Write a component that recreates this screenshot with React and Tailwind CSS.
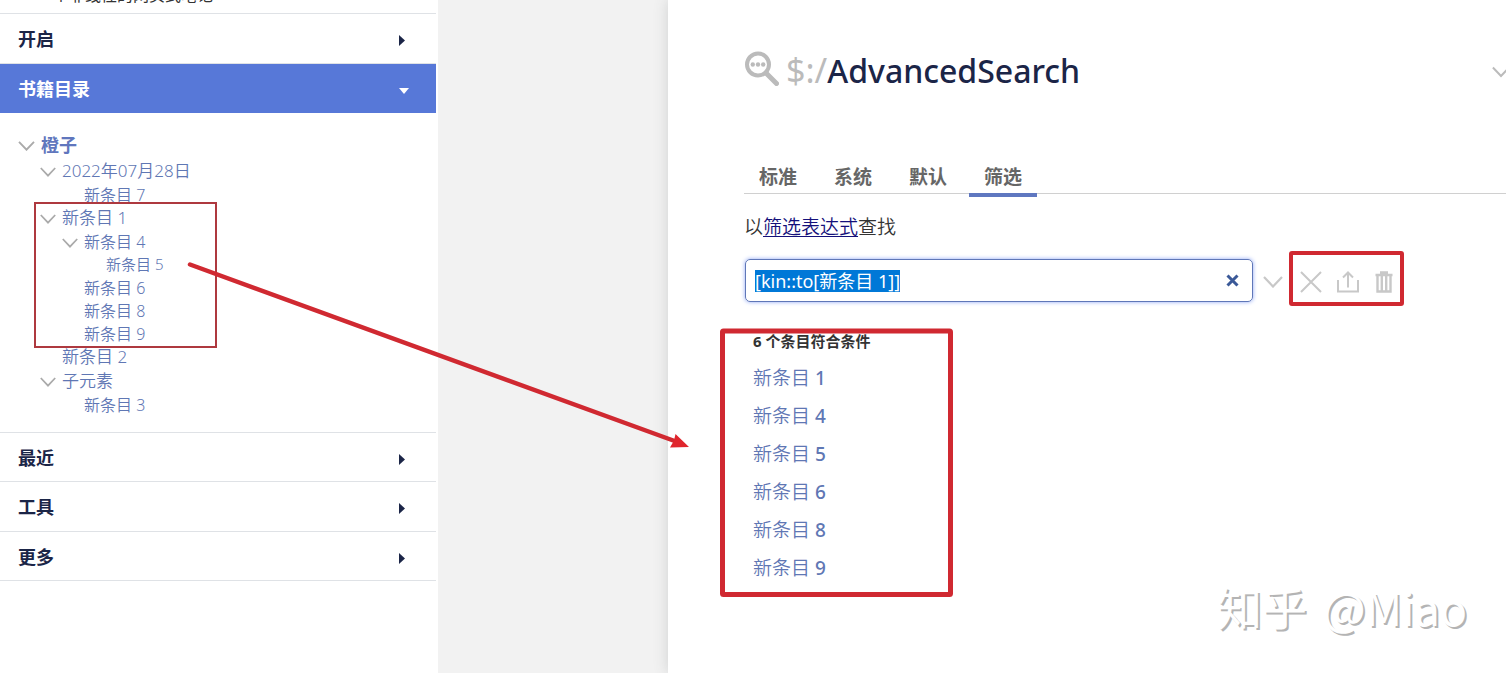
import { useEffect, useRef, useState } from "react";

const TREE = [
  { text: "2022年07月28日", level: 2, open: true },
  { text: "新条目 7", level: 3 },
  { text: "新条目 1", level: 2, open: true },
  { text: "新条目 4", level: 3, open: true },
  { text: "新条目 5", level: 4 },
  { text: "新条目 6", level: 3 },
  { text: "新条目 8", level: 3 },
  { text: "新条目 9", level: 3 },
  { text: "新条目 2", level: 2 },
  { text: "子元素", level: 2, open: true },
  { text: "新条目 3", level: 3 },
];

const LEVELS = {
  2: "h-6 pl-[40px] text-[17px]",
  3: "h-[23px] pl-[62px] text-[16px]",
  4: "h-[23px] pl-[84px] text-[15px]",
};

const TABS = ["标准", "系统", "默认", "筛选"];
const RESULTS = [1, 4, 5, 6, 8, 9];

function Chevron({ className }) {
  return (
    <svg className={className} viewBox="0 0 20 12" fill="none" stroke="currentColor" strokeWidth="2.2" aria-hidden="true">
      <path d="M1 1 L10 10.5 L19 1" />
    </svg>
  );
}

function Section({ title, className = "" }) {
  return (
    <button type="button" className={`flex w-full items-center justify-between border-b border-[#dfe2e6] pt-[2px] pr-[31px] pl-[18px] text-[18px] font-bold text-[#1b2547] ${className}`}>
      {title}
      <svg className="mt-[2px] h-[11px] w-[6px]" viewBox="0 0 6 11" fill="currentColor" aria-hidden="true">
        <path d="M0 0 L6 5.5 L0 11 Z" />
      </svg>
    </button>
  );
}

function Sidebar() {
  return (
    <aside className="w-[438px] shrink-0 bg-white pr-[2px]">
      <div className="flex h-[14px] flex-col justify-end border-b border-[#dfe2e6] pb-[7px] pl-[37px]">
        <p className="text-[16px] leading-[22px] whitespace-nowrap text-[#333]">一个非线性的网页式笔记</p>
      </div>
      <Section title="开启" className="h-[50px]" />
      <button type="button" className="flex h-[49px] w-full items-center justify-between bg-[#5778d8] pt-[2px] pr-[27px] pl-[18px] text-[18px] font-bold text-white">
        书籍目录
        <svg className="mt-[2px] h-[6px] w-[10px]" viewBox="0 0 10 6" fill="currentColor" aria-hidden="true">
          <path d="M0 0 H10 L5 6 Z" />
        </svg>
      </button>
      <nav className="border-b border-[#dfe2e6] pt-[18px] pb-4">
        <div className="flex h-7 items-center gap-[6px] pl-[18px] text-[18px] font-bold text-[#6076bd]">
          <Chevron className="mt-[2px] h-[10px] w-[17px] text-[#aaa]" />
          <a href="#orange">橙子</a>
        </div>
        <ul>
          {TREE.map((n) => (
            <li key={n.text} className={`flex items-center gap-[6px] font-[350] text-[#5f77b4] ${LEVELS[n.level]}`}>
              {n.open ? <Chevron className="mt-[2px] h-[10px] w-4 text-[#aaa]" /> : <span className="w-4" />}
              <a href="#item">{n.text}</a>
            </li>
          ))}
        </ul>
      </nav>
      <Section title="最近" className="h-[49px]" />
      <Section title="工具" className="h-[50px]" />
      <Section title="更多" className="h-[49px]" />
    </aside>
  );
}

function SearchBar() {
  const ref = useRef(null);
  const [query, setQuery] = useState("[kin::to[新条目 1]]");
  useEffect(() => {
    ref.current.focus();
    ref.current.select();
  }, []);
  return (
    <div className="mt-[18px] flex items-center text-[#c8c8c8]">
      <div className="flex h-[43px] w-[508px] items-center rounded-[5px] border border-[#5f77b8] pr-[13px] pl-[9px] shadow-[0_0_4px_#8ea6f5]">
        <input
          ref={ref}
          aria-label="筛选表达式"
          value={query}
          onChange={(e) => setQuery(e.target.value)}
          className="h-[22px] min-w-0 flex-1 text-[18px] leading-[22px] text-[#333] outline-none selection:bg-[#0078d7] selection:text-white"
        />
        <button type="button" aria-label="清除" onClick={() => setQuery("")} className="text-[#3b5998]">
          <svg className="h-[13px] w-[13px]" viewBox="0 0 13 13" stroke="currentColor" strokeWidth="3" aria-hidden="true">
            <path d="M1.5 1.5 L11.5 11.5 M11.5 1.5 L1.5 11.5" />
          </svg>
        </button>
      </div>
      <button type="button" aria-label="展开" className="ml-[10px]">
        <Chevron className="mt-[2px] h-3 w-5" />
      </button>
      <button type="button" aria-label="取消" className="ml-[17px]">
        <svg className="mt-[2px] h-[22px] w-[22px]" viewBox="0 0 22 22" stroke="currentColor" strokeWidth="2" aria-hidden="true">
          <path d="M1 1 L21 21 M21 1 L1 21" />
        </svg>
      </button>
      <button type="button" aria-label="导出" className="ml-[15px]">
        <svg className="mt-[2px] h-[22px] w-[22px]" viewBox="0 0 22 22" fill="none" stroke="currentColor" strokeWidth="2" aria-hidden="true">
          <path d="M1 9 V20.500 H21 V9" />
          <path d="M11 16.500 V2 M6 6.5 L11 1.5 L16 6.5" />
        </svg>
      </button>
      <button type="button" aria-label="删除" className="ml-4">
        <svg className="mt-[2px] h-[22px] w-[18px]" viewBox="0 0 18 22" fill="none" stroke="currentColor" strokeWidth="2" aria-hidden="true">
          <path d="M5 1.5 H13 M0.500 4 H17.500" strokeWidth="2.5" />
          <path d="M2.5 4 V20.5 H15.5 V4 M6.8 4 V20 M11.2 4 V20" strokeWidth="2.400" />
        </svg>
      </button>
    </div>
  );
}

function Annotations() {
  return (
    <svg className="pointer-events-none absolute top-0 left-0" width="1506" height="673" fill="none" stroke="#d02931" aria-hidden="true">
      <rect x="35" y="203" width="181" height="144" stroke="#ae393f" strokeWidth="2" />
      <path d="M190 264.500 L676 441.500" strokeWidth="4.500" strokeLinecap="round" />
      <path d="M689 447 L675.500 434 L674 440.500 L670 447.500 Z" fill="#e0262d" stroke="none" />
      <rect x="1291" y="253" width="111" height="51" rx="1" strokeWidth="4" />
      <rect x="722.500" y="331" width="228" height="263.500" rx="1" strokeWidth="5" />
    </svg>
  );
}

export default function App() {
  return (
    <div className="relative flex min-h-screen overflow-hidden bg-[#f2f2f2] font-['Noto_Sans','Noto_Sans_CJK_SC',sans-serif]">
      <Sidebar />
      <main className="ml-[230px] min-w-0 flex-1 bg-white pt-[46px] pl-[77px] shadow-[0_0_14px_#cfd0d0]">
        <header className="-mr-1 flex h-12 items-center justify-between">
          <h1 className="flex items-center gap-[7px] text-[32px] font-medium text-[#1b2547]">
            <svg className="-mt-1 h-[35px] w-[34px] text-[#bbb]" viewBox="0 0 34 35" fill="none" stroke="currentColor" aria-hidden="true">
              <circle cx="13" cy="13.500" r="11" strokeWidth="4" />
              <path d="M21 22 L31.500 32.500" strokeWidth="5" strokeLinecap="round" />
              <g fill="currentColor" stroke="none">
                <circle cx="7.800" cy="13.500" r="2.200" />
                <circle cx="13" cy="13.500" r="2.200" />
                <circle cx="18.200" cy="13.500" r="2.200" />
              </g>
            </svg>
            <span>
              <span className="text-[34px] font-normal text-[#bbb]">$:/</span>AdvancedSearch
            </span>
          </h1>
          <button type="button" aria-label="更多" className="text-[#bbb]">
            <Chevron className="mt-1 h-3 w-[18px]" />
          </button>
        </header>
        <div role="tablist" className="mt-[65px] -ml-px flex h-[38px] gap-[7px] bg-[linear-gradient(#d0d0d0,#d0d0d0)] bg-[length:100%_1px] bg-[position:0_34px] bg-no-repeat text-[19px] font-bold text-[#666]">
          {TABS.map((t) => (
            <button
              key={t}
              type="button"
              role="tab"
              aria-selected={t === "筛选"}
              className="border-b-4 border-transparent px-[15px] pt-[2px] aria-selected:border-[#5f77c0]"
            >
              {t}
            </button>
          ))}
        </div>
        <p className="mt-4 -ml-px text-[19px] leading-7 font-[350] text-[#333]">
          以
          <a href="#filter" className="text-[#14107a] underline underline-offset-2">
            筛选表达式
          </a>
          查找
        </p>
        <SearchBar />
        <section className="mt-[29px] pl-2">
          <h2 className="text-[15px] leading-5 font-bold text-[#333]">6 个条目符合条件</h2>
          <ul className="mt-2">
            {RESULTS.map((n) => (
              <li key={n} className="flex h-[38px] items-center text-[19px] font-[350] text-[#5f77b4]">
                <a href="#item">
                  新条目 <span className="font-medium">{n}</span>
                </a>
              </li>
            ))}
          </ul>
        </section>
      </main>
      <Annotations />
      <p className="absolute right-[39px] bottom-[38px] flex gap-4 font-['Noto_Sans_CJK_SC',sans-serif] text-[45px] leading-[56px] text-white [text-shadow:2px_2px_0_#b4b4b4]">
        <span>知乎</span>
        <span>@Miao</span>
      </p>
    </div>
  );
}
